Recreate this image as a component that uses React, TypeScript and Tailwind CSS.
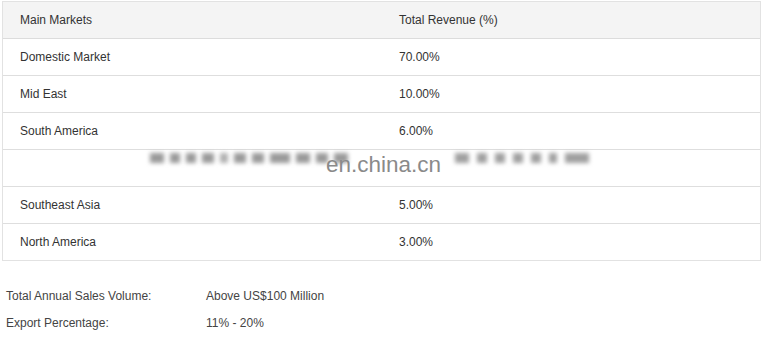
import React from "react";

const rows: [string, string][] = [
  ["Domestic Market", "70.00%"],
  ["Mid East", "10.00%"],
  ["South America", "6.00%"],
  ["", ""],
  ["Southeast Asia", "5.00%"],
  ["North America", "3.00%"],
];

export default function App() {
  return (
    <div className="relative w-[765px] h-[346px] bg-white text-[12px] text-[#333] overflow-hidden" style={{ fontFamily: '"Liberation Sans", Arial, sans-serif' }}>
      <div className="pl-[2px] pt-[1px] w-[761px]">
        <div className="border border-[#e2e2e2]">
          <div className="flex h-[37px] items-center bg-[#f4f4f4] border-b border-[#dcdcdc]">
            <div className="w-[379px] pl-[17px]">Main Markets</div>
            <div className="flex-1 pl-[17px]">Total Revenue (%)</div>
          </div>
          {rows.map(([a, b], i) => (
            <div key={i} className={`flex items-center ${i < rows.length - 1 ? "h-[37px] border-b border-[#dedede]" : "h-[36px]"}`}>
              <div className="w-[379px] pl-[17px]">{a}</div>
              <div className="flex-1 pl-[17px]">{b}</div>
            </div>
          ))}
        </div>
      </div>
      <div className="mt-[26px] pl-[6px] flex flex-col gap-[10px] text-[#444]">
        <div className="flex h-[17px] items-center">
          <div className="w-[200px]">Total Annual Sales Volume:</div>
          <div>Above US$100 Million</div>
        </div>
        <div className="flex h-[17px] items-center">
          <div className="w-[200px]">Export Percentage:</div>
          <div>11% - 20%</div>
        </div>
      </div>
      {/* watermark */}
      <div className="absolute left-[150px] top-[140px] w-[470px] h-[40px] pointer-events-none">
        <div className="absolute left-[0px] top-[13px] flex gap-[6px] blur-[2px]">
          <div className="w-[14px] h-[10px] bg-[#9a9a9a]" />
          <div className="w-[10px] h-[10px] bg-[#9a9a9a]" />
          <div className="w-[10px] h-[10px] bg-[#9a9a9a]" />
          <div className="w-[12px] h-[10px] bg-[#9a9a9a]" />
          <div className="w-[8px] h-[10px] bg-[#b0b0b0]" />
          <div className="w-[12px] h-[10px] bg-[#9a9a9a]" />
          <div className="w-[12px] h-[10px] bg-[#9a9a9a]" />
          <div className="w-[20px] h-[10px] bg-[#9a9a9a]" />
          <div className="w-[14px] h-[10px] bg-[#9a9a9a]" />
          <div className="w-[12px] h-[10px] bg-[#9a9a9a]" />
          <div className="w-[14px] h-[10px] bg-[#9a9a9a]" />
        </div>
        <div className="absolute left-[176px] top-[14px] text-[22.5px] text-[#8a8a8a] leading-none">en.china.cn</div>
        <div className="absolute left-[305px] top-[13px] flex gap-[8px] blur-[2px]">
          <div className="w-[14px] h-[10px] bg-[#a0a0a0]" />
          <div className="w-[10px] h-[10px] bg-[#a0a0a0]" />
          <div className="w-[10px] h-[10px] bg-[#a0a0a0]" />
          <div className="w-[10px] h-[10px] bg-[#a0a0a0]" />
          <div className="w-[10px] h-[10px] bg-[#a0a0a0]" />
          <div className="w-[8px] h-[10px] bg-[#a0a0a0]" />
          <div className="w-[24px] h-[10px] bg-[#a0a0a0]" />
        </div>
      </div>
    </div>
  );
}
